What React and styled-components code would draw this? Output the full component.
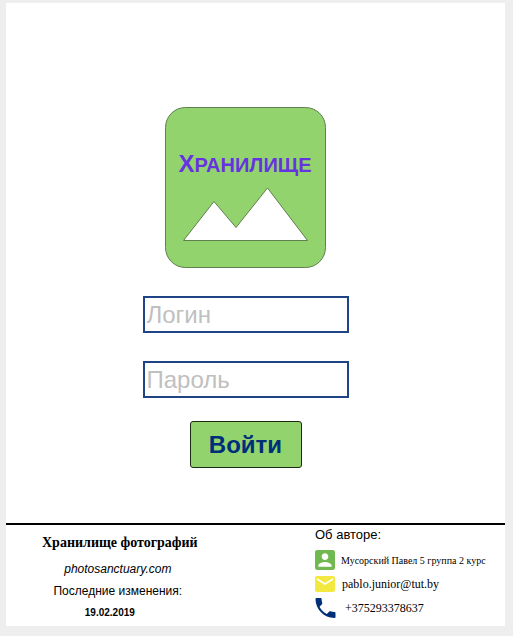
import React from "react";
import styled, { createGlobalStyle } from "styled-components";

const GlobalStyle = createGlobalStyle`
  *, *::before, *::after { box-sizing: border-box; }
  html, body, #root { height: 100%; }
  body {
    margin: 0;
    background: #eeeeee;
    color: #000;
    font-family: "Liberation Sans", Arial, sans-serif;
  }
`;

const Page = styled.div`
  display: flex;
  min-height: 100%;
  padding: 3px 8px 10px 6px;
`;

const Card = styled.div`
  display: flex;
  flex: 1;
  flex-direction: column;
  background: #fff;
`;

const Main = styled.main`
  display: flex;
  flex: 1;
  flex-direction: column;
  align-items: center;
  padding: 104px 20px 24px 0;
`;

const Logo = styled.svg`
  display: block;
  width: 161px;
  height: 161px;
`;

const LogoText = styled.text`
  fill: #6633e0;
  font-family: "Liberation Sans", Arial, sans-serif;
  font-size: 24px;
  font-weight: 700;
  text-anchor: middle;
`;

const SmallCaps = styled.tspan`
  font-size: 28px;
  font-variant: small-caps;
`;

const Form = styled.form`
  display: flex;
  flex-direction: column;
  align-items: center;
  margin-top: 28px;
`;

const Field = styled.input`
  width: 206px;
  height: 37px;
  margin-bottom: ${(p) => (p.$last ? 23 : 28)}px;
  padding: 0 2px;
  border: 2px solid #1f4485;
  border-radius: 0;
  background: #fff;
  color: #002f7a;
  font: 24px "Liberation Sans", Arial, sans-serif;
  outline: none;

  &::placeholder {
    color: #c0c0c0;
    opacity: 1;
  }
`;

const Submit = styled.button`
  width: 112px;
  height: 47px;
  padding: 0;
  border: 1px solid #1c2a14;
  border-radius: 3px;
  background: #92d36e;
  color: #002f7a;
  font: 700 24px "Liberation Sans", Arial, sans-serif;
  cursor: pointer;
`;

const Footer = styled.footer`
  display: flex;
  justify-content: space-between;
  border-top: 2px solid #000;
`;

const Site = styled.section`
  display: flex;
  flex-direction: column;
  align-items: center;
  padding: 6px 0 3px 36px;
`;

const SiteTitle = styled.h2`
  margin: 0 0 4px;
  font: 700 14px/24px "Liberation Serif", "Times New Roman", serif;
`;

const SiteLine = styled.p`
  margin: 0;
  padding-right: 4px;
  font-size: 12px;
  line-height: 24px;
`;

const SiteLink = styled.a`
  padding-right: 4px;
  color: inherit;
  font-size: 12px;
  font-style: italic;
  line-height: 20px;
  text-decoration: none;
`;

const Updated = styled.time`
  padding-right: 20px;
  font-size: 10px;
  font-weight: 700;
  line-height: 20px;
`;

const Author = styled.section`
  width: 190px;
`;

const AuthorTitle = styled.h3`
  margin: 0 0 3px;
  font-size: 13px;
  font-weight: 400;
  line-height: 20px;
`;

const Contact = styled.div`
  display: flex;
  align-items: center;
  gap: ${(p) => p.$gap}px;
  height: 24px;
  font: ${(p) => p.$size}px "Liberation Serif", "Times New Roman", serif;
  white-space: nowrap;

  svg { flex: none; }
  a { color: inherit; text-decoration: none; }
`;

export default function App() {
  return (
    <>
      <GlobalStyle />
      <Page>
        <Card>
          <Main>
            <Logo viewBox="0 0 161 161" role="img" aria-label="Хранилище">
              <rect x="0.5" y="0.5" width="160" height="160" rx="20" fill="#92d36e" stroke="#5f7f50" />
              <path d="M18.500 133.500 49 94.500 71 120.500 102.500 81 142.500 133.500Z" fill="#fff" stroke="#5f7f50" />
              <LogoText x="80" y="65">Х<SmallCaps>ранилище</SmallCaps></LogoText>
            </Logo>
            <Form onSubmit={(e) => e.preventDefault()}>
              <Field type="text" name="login" placeholder="Логин" aria-label="Логин" />
              <Field $last type="password" name="password" placeholder="Пароль" aria-label="Пароль" />
              <Submit type="submit">Войти</Submit>
            </Form>
          </Main>
          <Footer>
            <Site>
              <SiteTitle>Хранилище фотографий</SiteTitle>
              <SiteLink href="#">photosanctuary.com</SiteLink>
              <SiteLine>Последние изменения:</SiteLine>
              <Updated dateTime="2019-02-19">19.02.2019</Updated>
            </Site>
            <Author>
              <AuthorTitle>Об авторе:</AuthorTitle>
              <Contact $size={10} $gap={6}>
                <svg width="20" height="20" viewBox="3 3 18 18" fill="#71b850" aria-hidden="true">
                  <path d="M3 5v14c0 1.100.890 2 2 2h14c1.100 0 2-.900 2-2V5c0-1.100-.900-2-2-2H5c-1.110 0-2 .900-2 2zm12 4c0 1.660-1.340 3-3 3s-3-1.340-3-3 1.340-3 3-3 3 1.340 3 3zm-9 8c0-2 4-3.100 6-3.100s6 1.100 6 3.100v1H6v-1z" />
                </svg>
                <span>Мусорский Павел 5 группа 2 курс</span>
              </Contact>
              <Contact $size={12} $gap={7}>
                <svg width="20" height="16" viewBox="2 4 20 16" fill="#f3e83f" aria-hidden="true">
                  <path d="M20 4H4c-1.100 0-2 .900-2 2v12c0 1.100.900 2 2 2h16c1.100 0 2-.900 2-2V6c0-1.100-.900-2-2-2zm0 4-8 5-8-5V6l8 5 8-5v2z" />
                </svg>
                <a href="mailto:pablo.junior@tut.by">pablo.junior@tut.by</a>
              </Contact>
              <Contact $size={12} $gap={9}>
                <svg width="21" height="20" viewBox="3 3 18 18" fill="#002f7a" aria-hidden="true">
                  <path d="M6.620 10.790c1.440 2.830 3.760 5.140 6.590 6.590l2.200-2.200c.270-.270.670-.360 1.020-.240 1.120.370 2.330.570 3.570.570.550 0 1 .450 1 1V20c0 .550-.450 1-1 1-9.390 0-17-7.610-17-17 0-.550.450-1 1-1h3.500c.550 0 1 .450 1 1 0 1.250.200 2.450.570 3.570.110.350.030.740-.250 1.020l-2.200 2.200z" />
                </svg>
                <a href="tel:+375293378637">+375293378637</a>
              </Contact>
            </Author>
          </Footer>
        </Card>
      </Page>
    </>
  );
}
